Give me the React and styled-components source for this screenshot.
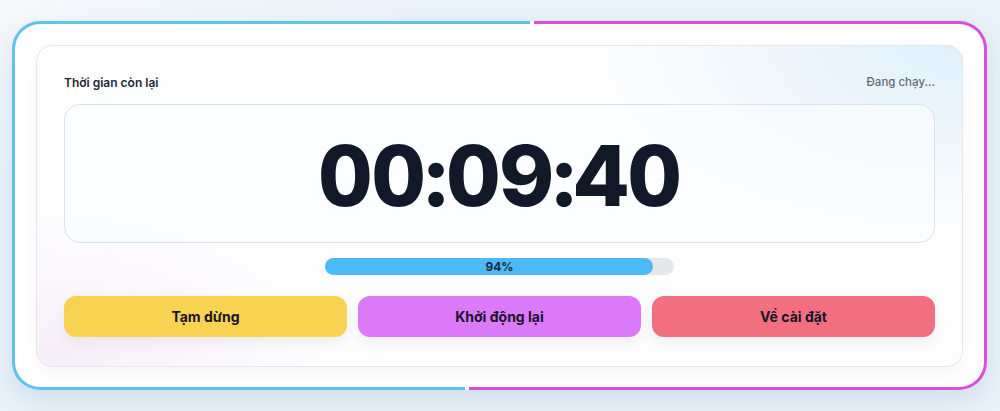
import React from "react";
import styled, { createGlobalStyle } from "styled-components";

const Global = createGlobalStyle`
  html, body { margin: 0; padding: 0; }
  body {
    font-family: Inter, "Noto Sans", sans-serif;
    background:
      radial-gradient(600px 300px at 0% 0%, #f6f9fc 0%, rgba(246,249,252,0) 70%),
      #eaf2f9;
    width: 1000px;
    height: 411px;
    overflow: hidden;
  }
`;

const Page = styled.div`
  padding: 21px 13px 22px 12px;
`;

const Frame = styled.div`
  border: 3px solid transparent;
  border-radius: 28px;
  background:
    linear-gradient(#ffffff, #ffffff) padding-box,
    linear-gradient(100deg, #5fc2ec 49.8%, #ffffff 49.8%, #ffffff 50.2%, #db4ddd 50.2%) border-box;
  padding: 21px 21px 20px 21px;
  box-shadow: 0 10px 24px rgba(120, 150, 185, 0.22);
`;

const Card = styled.div`
  border: 1px solid #e3e7ec;
  border-radius: 16px;
  padding: 26px 27px 29px 27px;
  background:
    radial-gradient(520px 260px at 100% 0%, rgba(214, 236, 250, 0.75) 0%, rgba(214,236,250,0) 70%),
    radial-gradient(420px 220px at 0% 100%, rgba(244, 232, 246, 0.7) 0%, rgba(244,232,246,0) 70%),
    #fdfdfe;
  box-shadow: 0 6px 16px rgba(0, 0, 0, 0.04);
`;

const Header = styled.div`
  display: flex;
  justify-content: space-between;
  align-items: center;
  height: 20px;
  margin-bottom: 12px;
`;

const Label = styled.span`
  font-size: 12px;
  font-weight: 600;
  color: #1f2937;
`;

const Status = styled.span`
  font-size: 11.5px;
  font-weight: 500;
  color: #5f6b7a;
`;

const Display = styled.div`
  height: 137px;
  border: 1px solid #cfe5f3;
  border-radius: 16px;
  background: rgba(250, 252, 254, 0.7);
  display: flex;
  align-items: center;
  justify-content: center;
`;

const Time = styled.div`
  font-size: 84px;
  font-weight: 800;
  color: #111827;
  letter-spacing: -0.012em;
  font-variant-numeric: tabular-nums;
  line-height: 1;
  margin-top: 4px;
`;

const ProgressWrap = styled.div`
  display: flex;
  justify-content: center;
  margin: 15px 0 21px;
`;

const Track = styled.div`
  position: relative;
  width: 40%;
  height: 17px;
  border-radius: 999px;
  background: #e6e7ea;
`;

const Fill = styled.div`
  height: 100%;
  border-radius: 999px;
  background: #4cbaf7;
`;

const Percent = styled.span`
  position: absolute;
  inset: 0;
  display: flex;
  align-items: center;
  justify-content: center;
  font-size: 12px;
  font-weight: 700;
  color: #1e293b;
`;

const Buttons = styled.div`
  display: grid;
  grid-template-columns: repeat(3, 1fr);
  gap: 11px;
`;

const Button = styled.button`
  height: 41px;
  border: none;
  border-radius: 12px;
  background: ${(p) => p.$bg};
  color: #17142b;
  font-family: Inter, "Noto Sans", sans-serif;
  font-size: 14px;
  font-weight: 700;
  box-shadow: 0 6px 14px rgba(0, 0, 0, 0.06);
  cursor: pointer;
`;

export default function App() {
  const pct = 94;
  return (
    <>
      <Global />
      <Page>
        <Frame>
          <Card>
            <Header>
              <Label>Thời gian còn lại</Label>
              <Status>Đang chạy...</Status>
            </Header>
            <Display>
              <Time>00:09:40</Time>
            </Display>
            <ProgressWrap>
              <Track>
                <Fill style={{ width: `${pct}%` }} />
                <Percent>{pct}%</Percent>
              </Track>
            </ProgressWrap>
            <Buttons>
              <Button $bg="#f8d251">Tạm dừng</Button>
              <Button $bg="#dc79f8">Khởi động lại</Button>
              <Button $bg="#f26f80">Về cài đặt</Button>
            </Buttons>
          </Card>
        </Frame>
      </Page>
    </>
  );
}
